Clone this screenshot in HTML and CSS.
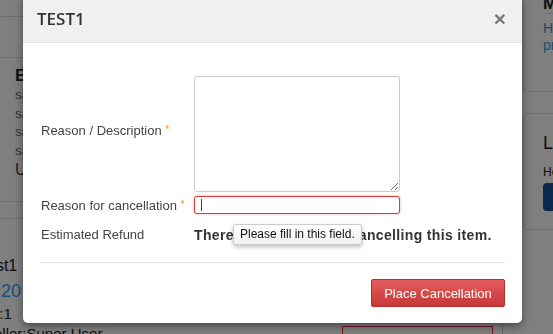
FILE: index.html
```html
<!DOCTYPE html>
<html lang="en">
<head>
  <meta charset="UTF-8" />
  <meta name="viewport" content="width=device-width, initial-scale=1.0" />
  <title>Cancel item</title>
  <link rel="stylesheet" href="styles.css">
</head>
<body>
  <div class="page">
    <aside class="side-left">
      <div class="panel-head"></div>
      <div class="booking">
        <h3>Booking Details</h3>
        <p class="small">sample reference 0012</p>
        <p class="small">sample customer name</p>
        <p class="small">sample address line</p>
        <p class="small">sample phone number</p>
        <p class="user">User: Super User</p>
      </div>
      <div class="panel-foot"></div>
      <div class="item-card">
        <div class="item-name">Test1</div>
        <div class="item-price">20</div>
        <div class="item-qty">Qty:1</div>
        <div class="item-seller">Seller:Super User</div>
      </div>
    </aside>

    <main class="middle">
      <div class="outline-btn"></div>
    </main>

    <aside class="side-right">
      <div class="panel">
        <h4>Manage</h4>
        <a class="link">Help with this</a>
        <a class="link">product</a>
      </div>
      <div class="panel panel-two">
        <h3>Links</h3>
        <p class="hint">Help</p>
        <div class="dark-btn"></div>
      </div>
    </aside>
  </div>

  <div class="backdrop"></div>

  <div class="modal">
    <div class="modal-header">
      <h4 class="modal-title">TEST1</h4>
      <button class="close" type="button">&times;</button>
    </div>
    <form class="modal-body">
      <div class="form-grid">
        <label class="desc-label">Reason / Description <span class="req">*</span></label>
        <textarea></textarea>

        <label>Reason for cancellation <span class="req">*</span></label>
        <div class="field">
          <input type="text" class="invalid" required />
          <div class="tooltip">Please fill in this field.</div>
        </div>

        <label class="refund-label">Estimated Refund</label>
        <div class="refund">There is no refund for cancelling this item.</div>
      </div>
      <hr />
      <div class="modal-footer">
        <button type="button" class="btn-danger">Place Cancellation</button>
      </div>
    </form>
  </div>
</body>
</html>
```

FILE: styles.css
```css
* {
  box-sizing: border-box;
}

html, body {
  margin: 0;
  height: 100%;
  overflow: hidden;
}

body {
  font-family: "Liberation Sans", Arial, sans-serif;
  background: #fff;
  color: #222;
}

/* page behind the dialog */
.page {
  display: flex;
  height: 100%;
}

.side-left {
  width: 260px;
  flex: none;
}

.panel-head {
  margin-top: 16px;
  height: 42px;
  border-top: 1px solid #ddd;
  border-bottom: 1px solid #ddd;
}

.booking {
  padding: 8px 15px 0;
}

.booking h3 {
  margin: 0;
  font-size: 17px;
  line-height: 20px;
}

.booking .small {
  margin: 0;
  font-size: 13px;
  line-height: 18.5px;
  color: #666;
}

.booking .user {
  margin: 0;
  font-size: 16px;
  line-height: 20px;
  color: #444;
}

.panel-foot {
  margin-top: 21px;
  height: 18px;
  border-top: 1px solid #ddd;
  border-bottom: 1px solid #ddd;
}

.item-card {
  padding-top: 35px;
  white-space: nowrap;
}

.item-name {
  margin-left: -21px;
  font-size: 16px;
  line-height: 24px;
}

.item-price {
  margin-left: 1px;
  font-size: 18px;
  line-height: 26px;
  color: #2a9cff;
}

.item-qty {
  margin-left: -24px;
  font-size: 15px;
  line-height: 20px;
}

.item-seller {
  margin-left: -16px;
  font-size: 15px;
  line-height: 20px;
}

.middle {
  width: 243px;
  flex: none;
  border-right: 1px solid #d0d0d0;
  padding: 326px 0 0 82px;
}

.outline-btn {
  width: 151px;
  height: 30px;
  border: 1px solid #e8283c;
}

.side-right {
  margin-left: 20px;
  width: 200px;
  flex: none;
}

.panel {
  margin-top: -7px;
  padding: 0 19px 37px;
  border: 1px solid #ddd;
  border-radius: 4px;
}

.panel h4 {
  margin: 0;
  font-size: 17px;
  line-height: 19px;
  border-bottom: 1px solid #ddd;
}

.panel .link {
  display: block;
  font-size: 14px;
  line-height: 17px;
  color: #34a0dc;
}

.panel h4 + .link {
  margin-top: 6px;
}

.panel-two {
  margin-top: 21px;
  padding: 18px 0 18px 19px;
}

.panel-two h3 {
  margin: 0;
  font-size: 18px;
  font-weight: normal;
  line-height: 22px;
}

.panel-two .hint {
  margin: 10px 0 0;
  font-size: 12px;
  line-height: 16px;
}

.dark-btn {
  margin-top: 3px;
  height: 28px;
  background: #145096;
  border-radius: 4px 0 0 4px;
}

.backdrop {
  position: fixed;
  inset: 0;
  background: rgba(0, 0, 0, 0.5);
}

/* dialog */
.modal {
  position: absolute;
  left: 23px;
  top: -5px;
  width: 499px;
  background: #fff;
  border-radius: 5px;
  box-shadow: 0 3px 9px rgba(0, 0, 0, 0.45);
  overflow: hidden;
}

.modal-header {
  height: 48px;
  display: flex;
  align-items: center;
  justify-content: space-between;
  padding: 0 16px 0 14px;
  background: #f0f0f0;
  border-bottom: 1px solid #e2e2e2;
}

.modal-title {
  margin: 0;
  font-family: "Open Sans", "Liberation Sans", sans-serif;
  font-size: 17px;
  font-weight: 600;
  color: #333;
}

.close {
  padding: 0;
  border: none;
  background: none;
  font-family: "Liberation Sans", Arial, sans-serif;
  font-size: 21px;
  font-weight: bold;
  line-height: 1;
  color: #777;
}

.modal-body {
  padding: 33px 17px 16px 18px;
}

.form-grid {
  display: grid;
  grid-template-columns: 153px 206px;
  row-gap: 4px;
  align-items: center;
}

.form-grid label {
  font-size: 13px;
  color: #444;
}

.form-grid .desc-label {
  padding-bottom: 8px;
}

.req {
  font-size: 10px;
  color: #f0883a;
  vertical-align: 2px;
}

textarea {
  display: block;
  width: 206px;
  height: 116px;
  border: 1px solid #ccc;
  border-radius: 3px;
}

.field {
  position: relative;
}

input.invalid {
  display: block;
  width: 206px;
  height: 18px;
  border: 1px solid #e6383c;
  border-radius: 3px;
  box-shadow: 0 0 2px rgba(230, 56, 60, 0.6);
  outline: none;
}

.field::after {
  content: "";
  position: absolute;
  left: 7px;
  top: 3px;
  width: 1px;
  height: 12px;
  background: #8b1a1a;
}

.tooltip {
  position: absolute;
  left: 39px;
  top: 28px;
  z-index: 2;
  height: 21px;
  padding: 0 6px;
  font-size: 12px;
  line-height: 19px;
  color: #111;
  white-space: nowrap;
  background: linear-gradient(#fff, #f1f1f1);
  border: 1px solid #ccc;
  border-radius: 2px;
  box-shadow: 0 2px 4px rgba(0, 0, 0, 0.25);
}

.refund-label,
.refund {
  margin-top: 8px;
  line-height: 18px;
}

.refund {
  font-size: 14px;
  font-weight: bold;
  letter-spacing: 0.35px;
  color: #333;
  white-space: nowrap;
}

hr {
  margin: 18px 0 16px;
  border: none;
  border-top: 1px solid #e5e5e5;
}

.modal-footer {
  display: flex;
  justify-content: flex-end;
}

.btn-danger {
  height: 28px;
  width: 134px;
  padding: 0;
  font-family: "Liberation Sans", Arial, sans-serif;
  font-size: 13px;
  color: #fff;
  background: linear-gradient(#e55b5b, #c83838);
  border: 1px solid #b3302f;
  border-radius: 2px;
}
```
